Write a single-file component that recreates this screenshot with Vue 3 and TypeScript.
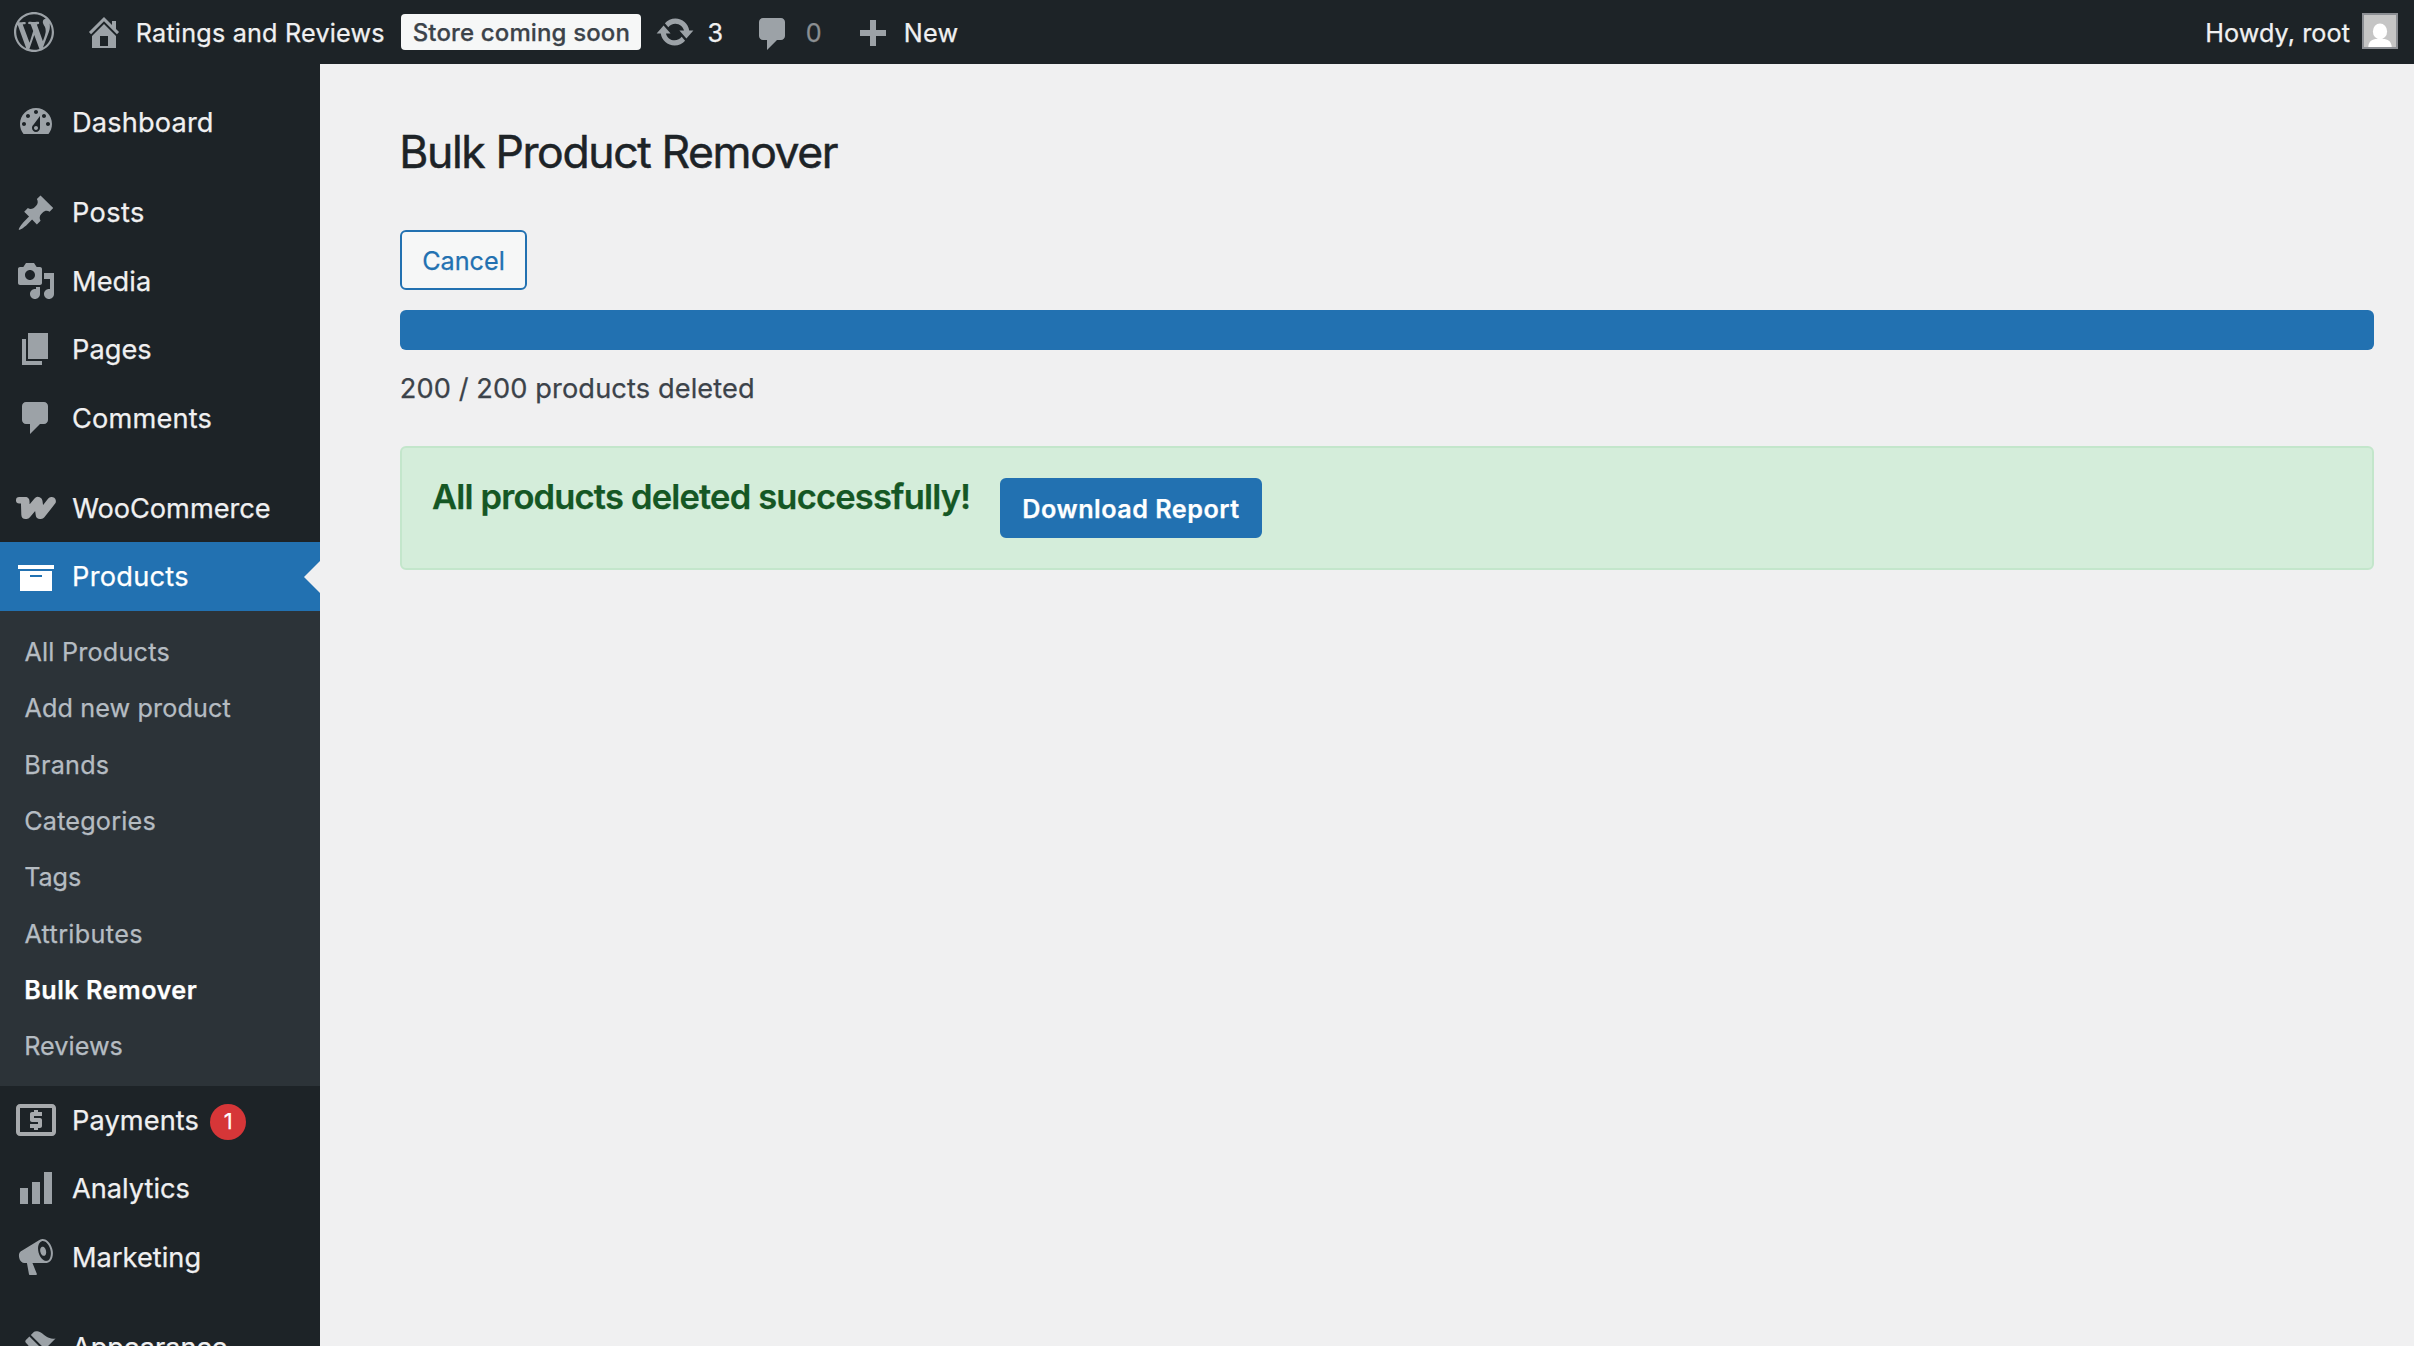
<script setup lang="ts">
interface MenuItem {
  label: string
  icon: string
  track: number
  nudge?: number
  gap?: boolean
  badge?: number
  children?: SubItem[]
}
interface SubItem {
  label: string
  track: number
  nudge?: number
  current?: boolean
}

const icons: Record<string, string> = {
  dashboard:
    'M3.76 16h12.48c1.1-1.37 1.76-3.11 1.76-5 0-4.42-3.58-8-8-8s-8 3.58-8 8c0 1.89.66 3.63 1.76 5zM10 4c.55 0 1 .45 1 1s-.45 1-1 1-1-.45-1-1 .45-1 1-1zM6 6c.55 0 1 .45 1 1s-.45 1-1 1-1-.45-1-1 .45-1 1-1zm8 0c.55 0 1 .45 1 1s-.45 1-1 1-1-.45-1-1 .45-1 1-1zm-5.37 5.55L12 7v6c0 1.1-.9 2-2 2s-2-.9-2-2c0-.57.24-1.08.63-1.45zM4 10c.55 0 1 .45 1 1s-.45 1-1 1-1-.45-1-1 .45-1 1-1zm12 0c.55 0 1 .45 1 1s-.45 1-1 1-1-.45-1-1 .45-1 1-1zm-5 3c0-.55-.45-1-1-1s-1 .45-1 1 .45 1 1 1 1-.45 1-1z',
  post: 'M10.44 3.02l1.82-1.82 6.36 6.35-1.83 1.82c-1.05-.68-2.48-.57-3.41.36l-.75.75c-.92.93-1.04 2.35-.35 3.41l-1.83 1.82-2.41-2.41-2.8 2.79c-.42.42-3.38 2.71-3.8 2.29s1.86-3.39 2.28-3.81l2.79-2.79L4.1 9.36l1.83-1.82c1.05.69 2.48.57 3.4-.36l.75-.75c.93-.92 1.05-2.35.36-3.41z',
  media:
    'M13 11V4c0-.55-.45-1-1-1h-1.67L9 1H5L3.67 3H2c-.55 0-1 .45-1 1v7c0 .55.45 1 1 1h10c.55 0 1-.45 1-1zM7 4.5c1.38 0 2.5 1.12 2.5 2.5S8.38 9.5 7 9.5 4.5 8.38 4.5 7 5.62 4.5 7 4.5zM14 6h5v10.5c0 1.38-1.12 2.5-2.5 2.5S14 17.88 14 16.5s1.12-2.5 2.5-2.5c.17 0 .34.02.5.05V9h-3V6zm-4 8.05V13h2v3.5c0 1.38-1.12 2.5-2.5 2.5S7 17.88 7 16.5 8.12 14 9.5 14c.17 0 .34.02.5.05z',
  page: 'M6 15V2h10v13H6zm-1 1h8v2H3V5h2v11z',
  comment: 'M5 2h9c1.1 0 2 .9 2 2v7c0 1.1-.9 2-2 2h-2l-5 5v-5H5c-1.1 0-2-.9-2-2V4c0-1.1.9-2 2-2z',
  archive: 'M19 4v2H1V4h18zM2 7h16v10H2V7zm11 3V9H7v1h6z',
  payments:
    'M9 15h2v-1h1c.55 0 1-.45 1-1v-3c0-.55-.45-1-1-1H9V8h4V6h-2V5H9v1H8c-.55 0-1 .45-1 1v3c0 .55.45 1 1 1h3v1H7v2h2v1zm9-13H2C.89 2 .01 2.89.01 4L0 16c0 1.11.89 2 2 2h16c1.11 0 2-.89 2-2V4c0-1.11-.89-2-2-2zm0 14H2V4h16v12z',
  chart: 'M18 18V2h-4v16h4zm-6 0V7H8v11h4zm-6 0v-8H2v8h4z',
  megaphone:
    'M18.15 5.94c.46 1.62.38 3.22-.02 4.48-.42 1.28-1.26 2.18-2.3 2.48-.16.06-.26.06-.4.06-.06.02-.12.02-.18.02-.06.02-.14.02-.22.02h-6.8l2.22 5.5c.02.14-.06.26-.14.34-.08.1-.24.16-.34.16H6.95c-.1 0-.26-.06-.34-.16-.08-.08-.16-.2-.14-.34l-1-5.5H4.25l-.02-.02c-.5.06-1.08-.18-1.54-.62s-.88-1.08-1.06-1.88c-.24-.8-.2-1.56-.02-2.2.18-.62.58-1.08 1.06-1.3l.02-.02 9-5.4c.1-.06.18-.1.24-.16.06-.04.14-.08.24-.12.16-.08.28-.12.5-.18 1.04-.3 2.24.1 3.22.98s1.84 2.24 2.26 3.86zm-2.58 5.98h-.02c.4-.1.74-.34 1.04-.7.58-.7.86-1.76.86-3.04 0-.64-.1-1.3-.28-1.98-.34-1.36-1.02-2.5-1.78-3.24s-1.68-1.1-2.46-.88c-.82.22-1.4.96-1.7 2-.32 1.04-.28 2.36.06 3.72.38 1.36 1 2.5 1.8 3.24.78.74 1.62 1.1 2.48.88zm-2.54-7.08c.22-.04.42-.02.62.04.38.16.76.48 1.02 1s.42 1.2.42 1.78c0 .3-.04.56-.12.8-.18.48-.44.84-.86.94-.34.1-.8-.06-1.14-.4s-.64-.86-.78-1.5c-.18-.62-.12-1.24.02-1.72s.48-.84.82-.94z',
  appearance:
    'M14.48 11.06L7.41 3.99l1.5-1.5c.5-.56 2.3-.47 3.51.32 1.21.8 1.43 1.28 2.91 2.1 1.18.64 2.45 1.26 4.45.85zm-.71.71L6.7 4.7 4.93 6.47c-.39.39-.39 1.02 0 1.41l1.06 1.06c.39.39.39 1.03 0 1.42-.6.6-1.43 1.11-2.21 1.69-.35.26-.7.53-1.01.84C1.43 14.23.4 16.08 1.4 17.07c.99 1 2.84-.03 4.18-1.36.31-.31.58-.66.85-1.02.57-.78 1.08-1.61 1.69-2.21.39-.39 1.02-.39 1.41 0l1.06 1.06c.39.39 1.02.39 1.41 0z',
  home: 'M16 8.5l1.53 1.53-1.06 1.06L10 4.6l-6.47 6.49-1.06-1.06L10 2.5l4 4v-2h2v4zm-6-2.46l6 5.99V18H4v-5.97zM12 17v-5H8v5h4z',
  update:
    'M10.2 3.28c3.53 0 6.43 2.61 6.92 6h2.08l-3.5 4-3.5-4h2.32c-.45-1.97-2.21-3.45-4.32-3.45-1.45 0-2.73.71-3.54 1.78L4.95 5.66C6.23 4.2 8.11 3.28 10.2 3.28zm-.4 13.44c-3.52 0-6.43-2.61-6.92-6H.8l3.5-4c1.17 1.33 2.33 2.67 3.5 4H5.48c.45 1.97 2.21 3.45 4.32 3.45 1.45 0 2.73-.71 3.54-1.78l1.71 1.95c-1.28 1.46-3.15 2.38-5.25 2.38z',
  plus: 'M17 7v3h-5v5H9v-5H4V7h5V2h3v5h5z',
  wordpress:
    'M20 10c0-5.51-4.49-10-10-10C4.48 0 0 4.49 0 10c0 5.52 4.48 10 10 10 5.51 0 10-4.48 10-10zM7.78 15.37L4.37 6.22c.55-.02 1.17-.08 1.17-.08.5-.06.44-1.13-.06-1.11 0 0-1.45.11-2.37.11-.18 0-.37 0-.58-.01C4.12 2.69 6.87 1.11 10 1.11c2.33 0 4.45.87 6.05 2.34-.68-.11-1.65.39-1.65 1.58 0 .74.45 1.36.9 2.1.35.61.55 1.36.55 2.46 0 1.49-1.4 5-1.4 5l-3.03-8.37c.54-.02.82-.17.82-.17.5-.05.44-1.25-.06-1.22 0 0-1.44.12-2.38.12-.87 0-2.33-.12-2.33-.12-.5-.03-.56 1.2-.06 1.22l.92.08 1.26 3.41zM17.41 10c.24-.64.74-1.87.43-4.25.7 1.29 1.05 2.71 1.05 4.25 0 3.29-1.73 6.24-4.4 7.78.97-2.59 1.94-5.2 2.92-7.78zM6.1 18.09C3.12 16.65 1.11 13.53 1.11 10c0-1.3.23-2.48.72-3.59C3.25 10.3 4.67 14.2 6.1 18.09zm4.03-6.63l2.58 6.98c-.86.29-1.76.45-2.71.45-.79 0-1.57-.11-2.29-.33.81-2.38 1.62-4.74 2.42-7.1z',
}

const menu: MenuItem[] = [
  { label: 'Dashboard', icon: 'dashboard', track: 0.16 },
  { label: 'Posts', icon: 'post', track: 0.35, gap: true },
  { label: 'Media', icon: 'media', track: 0.1 },
  { label: 'Pages', icon: 'page', track: 0.05 },
  { label: 'Comments', icon: 'comment', track: 0.18 },
  { label: 'WooCommerce', icon: 'woo', track: -0.05, nudge: 0.2, gap: true },
  {
    label: 'Products',
    icon: 'archive',
    track: 0.27,
    children: [
      { label: 'All Products', track: 0.22, nudge: 0.2 },
      { label: 'Add new product', track: 0.13, nudge: 0.2 },
      { label: 'Brands', track: 0.24 },
      { label: 'Categories', track: 0.2 },
      { label: 'Tags', track: -0.1 },
      { label: 'Attributes', track: 0.34, nudge: 0.2 },
      { label: 'Bulk Remover', track: 0.5, current: true },
      { label: 'Reviews', track: 0.04 },
    ],
  },
  { label: 'Payments', icon: 'payments', track: 0.1, badge: 1 },
  { label: 'Analytics', icon: 'chart', track: 0 },
  { label: 'Marketing', icon: 'megaphone', track: 0.03 },
  { label: 'Appearance', icon: 'appearance', track: -0.08, gap: true },
]

const progress = { done: 200, total: 200 }

const fit = (i: { track: number; nudge?: number }) => ({
  letterSpacing: i.track + 'px',
  marginLeft: (i.nudge ?? 0) + 'px',
})
</script>

<template>
  <div class="admin">
    <header class="bar">
      <svg class="ico wp" viewBox="0 0 20 20"><path :d="icons.wordpress" /></svg>
      <svg class="ico home" viewBox="0 0 20 20"><path :d="icons.home" /></svg>
      <span class="site">Ratings and Reviews</span>
      <span class="store">Store coming soon</span>
      <svg class="ico update" viewBox="0 0 20 20"><path :d="icons.update" /></svg>
      <span class="updates">3</span>
      <svg class="ico bubble" viewBox="0 0 20 20"><path :d="icons.comment" /></svg>
      <span class="pending">0</span>
      <svg class="ico plus" viewBox="0 0 20 20"><path :d="icons.plus" /></svg>
      <span class="new">New</span>
      <span class="howdy">Howdy, root</span>
      <svg class="avatar" viewBox="0 0 36 36">
        <rect width="36" height="36" fill="#8c8f94" />
        <rect x="2" y="2" width="32" height="32" fill="#c5c5c5" />
        <ellipse cx="18" cy="18.4" rx="7.1" ry="7.9" fill="#fff" />
        <path d="M6.3 34c.2-4.6 2.5-7.2 7-8h9.4c4.5.8 6.8 3.4 7 8z" fill="#fff" />
      </svg>
    </header>

    <div class="body">
      <nav class="side">
        <template v-for="item in menu" :key="item.label">
          <a class="item" :class="{ gap: item.gap, active: item.children }">
            <svg v-if="item.icon === 'woo'" class="ico woo" viewBox="0 0 40 40">
              <path class="serif" d="M3.2 12.2H9" />
              <path d="M9.2 13.2L9.6 26.6L10.6 26.6L21.8 13.2L22.2 13.4L24 26.6L25 26.6L35.6 13.2" />
            </svg>
            <svg v-else class="ico" :class="item.icon" viewBox="0 0 20 20">
              <path :d="icons[item.icon]" />
            </svg>
            <span class="label" :style="fit(item)">{{ item.label }}</span>
            <span v-if="item.badge" class="badge">{{ item.badge }}</span>
          </a>
          <div v-if="item.children" class="sub">
            <a v-for="s in item.children" :key="s.label" :class="{ current: s.current }">
              <span :style="fit(s)">{{ s.label }}</span>
            </a>
          </div>
        </template>
      </nav>

      <main class="main">
        <h1>Bulk Product Remover</h1>
        <button class="cancel">Cancel</button>
        <div class="track">
          <div class="fill" :style="{ width: (progress.done / progress.total) * 100 + '%' }"></div>
        </div>
        <p class="count">{{ progress.done }} / {{ progress.total }} products deleted</p>
        <section class="notice">
          <strong>All products deleted successfully!</strong>
          <button class="download">Download Report</button>
        </section>
      </main>
    </div>
  </div>
</template>

<style>
body {
  margin: 0;
  background: #f0f0f1;
}
</style>

<style scoped>
.admin {
  height: 1346px;
  overflow: hidden;
  display: flex;
  flex-direction: column;
  font-family: Inter, 'Liberation Sans', sans-serif;
  font-weight: 400;
  -webkit-text-stroke-width: 0.25px;
  background: #f0f0f1;
}
.ico {
  width: 40px;
  height: 40px;
  flex: none;
  fill: #9ca2a7;
}

/* top bar */
.bar {
  flex: none;
  display: flex;
  align-items: center;
  height: 64px;
  box-sizing: border-box;
  padding: 0 16px 0 14px;
  background: #1d2327;
  color: #f0f0f1;
  font-size: 25.2px;
  line-height: 64px;
  white-space: nowrap;
}
.site,
.updates,
.pending,
.new,
.howdy {
  padding-top: 2px;
}
.home {
  margin-left: 30px;
}
.site {
  width: 265.2px;
  margin-left: 11.8px;
  letter-spacing: 0.2px;
}
.store {
  width: 240px;
  height: 36px;
  box-sizing: border-box;
  padding: 1px 0 0 11.7px;
  border-radius: 4px;
  background: #f6f7f7;
  color: #3c434a;
  font-size: 24px;
  font-weight: 500;
  line-height: 36px;
  letter-spacing: 0.14px;
}
.update {
  margin-left: 14px;
}
.updates {
  width: 34px;
  margin-left: 12.4px;
}
.bubble {
  margin: 4px 0 0 12px;
}
.pending {
  width: 34px;
  margin-left: 12.3px;
  color: #8b8f92;
}
.plus {
  margin: 8px 0 0 12px;
}
.new {
  margin-left: 12.2px;
  letter-spacing: 0.2px;
}
.howdy {
  margin-left: auto;
  letter-spacing: 0.07px;
}
.avatar {
  width: 36px;
  height: 36px;
  margin: -2px 0 0 12px;
}

.body {
  flex: 1;
  min-height: 0;
  display: flex;
}

/* side menu */
.side {
  flex: none;
  width: 320px;
  box-sizing: border-box;
  padding-top: 24px;
  overflow: hidden;
  background: #1d2327;
}
.item {
  position: relative;
  display: flex;
  align-items: center;
  height: 68.4px;
  box-sizing: border-box;
  padding-left: 16px;
  color: #f0f0f1;
  font-size: 27.2px;
}
.item.gap {
  margin-top: 22px;
}
.label {
  padding: 0.8px 0 0 16px;
}
.active {
  background: #2271b1;
  color: #fff;
}
.active .ico {
  fill: #fff;
}
.active::after {
  content: '';
  position: absolute;
  right: 0;
  top: 50%;
  margin-top: -16px;
  border: 16px solid transparent;
  border-left: 0;
  border-right-color: #f0f0f1;
}
.payments {
  fill: #a7aaad;
}
.ico.woo {
  fill: none;
  stroke: #a7aaad;
  stroke-width: 8.6;
  stroke-linecap: round;
  stroke-linejoin: round;
}
.woo .serif {
  stroke-width: 6.4;
}
.badge {
  width: 36px;
  height: 36px;
  margin: 4px 0 0 11.2px;
  border-radius: 50%;
  background: #d63638;
  color: #fff;
  font-size: 22px;
  line-height: 34px;
  text-align: center;
}
.sub {
  padding: 13px 0 11px;
  background: #2c3338;
}
.sub a {
  display: block;
  height: 56.4px;
  padding-left: 24.2px;
  color: #b5bcc2;
  font-size: 25.2px;
  line-height: 56.4px;
}
.sub .current {
  color: #fff;
  font-weight: 600;
}

/* page */
.main {
  flex: 1;
  padding: 57.5px 40px 0 80px;
}
h1 {
  margin: 0 0 48.5px -0.7px;
  color: #1d2327;
  font-size: 44.5px;
  font-weight: 400;
  line-height: 60px;
  letter-spacing: -1.4px;
  -webkit-text-stroke-width: 0.5px;
}
button {
  display: block;
  height: 60px;
  box-sizing: border-box;
  border: 2px solid #2271b1;
  border-radius: 6px;
  padding: 1px 0 0;
  font: 400 25.2px Inter, 'Liberation Sans', sans-serif;
  text-align: center;
  white-space: nowrap;
}
.cancel {
  width: 127px;
  background: #f6f7f7;
  color: #2271b1;
}
.track {
  height: 40px;
  margin-top: 20px;
  border-radius: 6px;
  overflow: hidden;
  background: #dcdcde;
}
.fill {
  height: 100%;
  background: #2271b1;
}
.count {
  margin: 18px 0 0 -0.3px;
  color: #3c434a;
  font-size: 27.2px;
  line-height: 42px;
  letter-spacing: 0.11px;
}
.notice {
  display: flex;
  align-items: flex-start;
  height: 124px;
  box-sizing: border-box;
  margin-top: 36px;
  padding: 30px;
  border: 2px solid #c3e6cb;
  border-radius: 6px;
  background: #d4edda;
}
.notice strong {
  width: 568px;
  margin-top: -6px;
  color: #155724;
  font-size: 34.5px;
  font-weight: 600;
  line-height: 50px;
  letter-spacing: -0.82px;
  white-space: nowrap;
}
.download {
  width: 262px;
  background: #2271b1;
  color: #fff;
  font-weight: 600;
  letter-spacing: 0.5px;
}
</style>
